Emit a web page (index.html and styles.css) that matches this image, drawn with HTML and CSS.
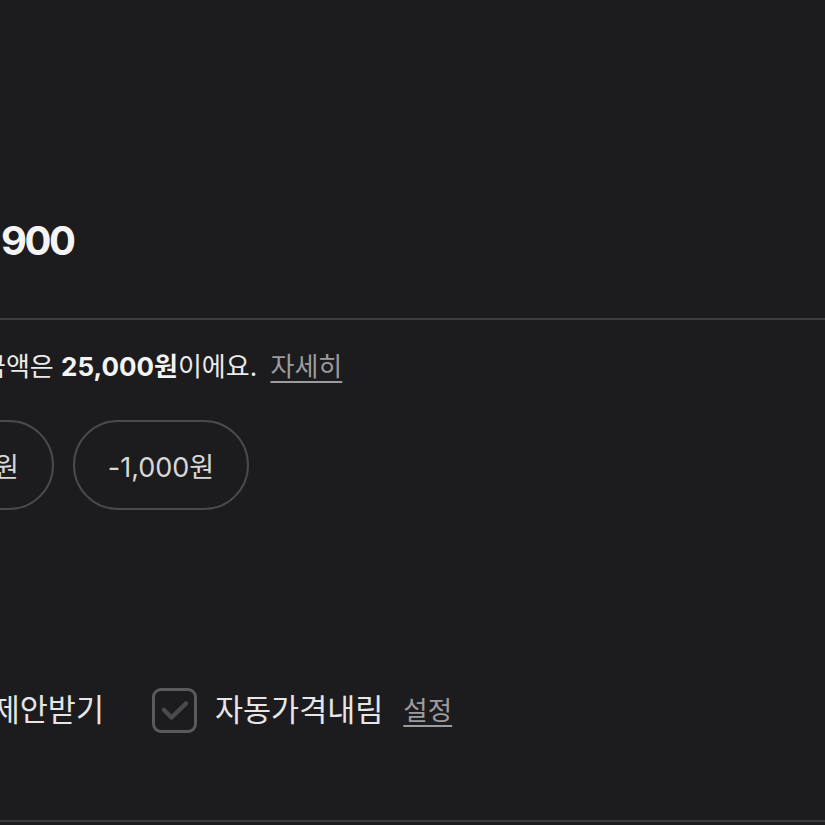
FILE: index.html
```html
<!DOCTYPE html>
<html lang="ko">
<head>
<meta charset="utf-8">
<title>가격 설정</title>
<link rel="stylesheet" href="styles.css">
</head>
<body>
<main class="sheet">
  <section class="price-block">
    <p class="price">900</p>
  </section>
  <hr class="divider">
  <section class="suggest">
    <p class="notice">금액은 <strong>25,000원</strong>이에요. <a class="link" href="#">자세히</a></p>
    <div class="chips">
      <button class="chip chip-cut" type="button">-500원</button>
      <button class="chip" type="button">-1,000원</button>
    </div>
  </section>
  <section class="options">
    <span class="option-label option-cut">가격 제안받기</span>
    <span class="checkbox" aria-hidden="true">
      <svg viewBox="0 0 39 39" width="39" height="39"><path d="M9 19 L16.5 26.5 L31 12.5" fill="none" stroke="#4a4a4c" stroke-width="4.5" stroke-linecap="round" stroke-linejoin="round"/></svg>
    </span>
    <span class="option-label">자동가격내림</span>
    <a class="link option-link" href="#">설정</a>
  </section>
  <div class="bottom-line"></div>
</main>
</body>
</html>
```

FILE: styles.css
```css
* { box-sizing: border-box; }
html, body {
  margin: 0;
  padding: 0;
  background: #1c1c1e;
  overflow: hidden;
}
body {
  width: 825px;
  height: 825px;
  font-family: Inter, "Noto Sans CJK KR", sans-serif;
  color: #ececec;
}
.sheet {
  display: flex;
  flex-direction: column;
}
.price-block {
  padding-top: 216px;
}
.price {
  margin: 0;
  padding-left: 1px;
  font-size: 40px;
  line-height: 50px;
  font-weight: 700;
  letter-spacing: -2.5px;
  color: #f4f4f4;
}
.divider {
  margin: 52px 0 0;
  border: 0;
  height: 2px;
  background: #3e3e40;
}
.suggest {
  display: flex;
  flex-direction: column;
  padding-top: 28px;
}
.notice {
  margin: 0 0 0 -18px;
  font-size: 26px;
  line-height: 38px;
  color: #ebebeb;
  white-space: nowrap;
}
.notice strong {
  font-weight: 700;
  color: #f4f4f4;
}
.link {
  color: #9c9c9e;
  text-decoration: underline;
  text-decoration-thickness: 2px;
  text-underline-offset: 5px;
  margin-left: 6px;
}
.chips {
  display: flex;
  gap: 19px;
  margin-top: 34px;
}
.chip {
  height: 90px;
  padding: 0 33px;
  border: 2px solid #4a4a4c;
  border-radius: 45px;
  background: transparent;
  color: #d8d8d8;
  font-family: Inter, "Noto Sans CJK KR", sans-serif;
  font-size: 27px;
  white-space: nowrap;
}
.chip-cut {
  margin-left: -104px;
}
.options {
  display: flex;
  align-items: center;
  margin-top: 177px;
  height: 46px;
}
.option-label {
  font-size: 30.5px;
  line-height: 46px;
  color: #e6e6e6;
  white-space: nowrap;
}
.option-cut {
  margin-left: -73px;
}
.checkbox {
  width: 45px;
  height: 45px;
  margin-left: 48px;
  margin-right: 18px;
  border: 3px solid #5a5a5c;
  border-radius: 9px;
  display: flex;
  align-items: center;
  justify-content: center;
  flex: none;
}
.checkbox svg {
  width: 39px;
  height: 39px;
}
.option-link {
  font-size: 26.5px;
  line-height: 46px;
  margin-left: 20px;
}
.bottom-line {
  margin-top: 87px;
  height: 2px;
  background: #3a3a3c;
}
```
